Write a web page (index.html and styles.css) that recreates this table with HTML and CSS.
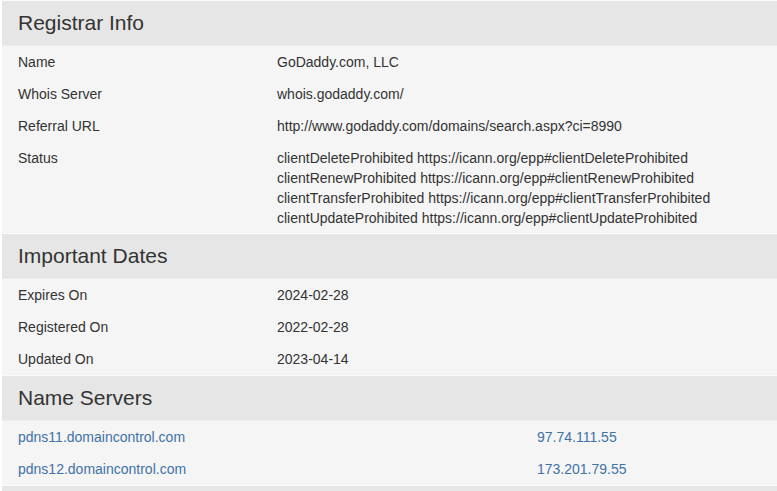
FILE: index.html
```html
<!DOCTYPE html>
<html>
<head>
<meta charset="utf-8">
<link rel="stylesheet" href="styles.css">
</head>
<body>
<div class="panel">
  <section class="sec">
    <h3 class="head">Registrar Info</h3>
    <div class="row"><div>Name</div><div>GoDaddy.com, LLC</div></div>
    <div class="row"><div>Whois Server</div><div>whois.godaddy.com/</div></div>
    <div class="row"><div>Referral URL</div><div>http://www.godaddy.com/domains/search.aspx?ci=8990</div></div>
    <div class="row last"><div>Status</div><div>clientDeleteProhibited https://icann.org/epp#clientDeleteProhibited<br>clientRenewProhibited https://icann.org/epp#clientRenewProhibited<br>clientTransferProhibited https://icann.org/epp#clientTransferProhibited<br>clientUpdateProhibited https://icann.org/epp#clientUpdateProhibited</div></div>
  </section>
  <section class="sec">
    <h3 class="head">Important Dates</h3>
    <div class="row"><div>Expires On</div><div>2024-02-28</div></div>
    <div class="row"><div>Registered On</div><div>2022-02-28</div></div>
    <div class="row"><div>Updated On</div><div>2023-04-14</div></div>
  </section>
  <section class="sec">
    <h3 class="head">Name Servers</h3>
    <div class="row ns"><a href="#">pdns11.domaincontrol.com</a><a href="#">97.74.111.55</a></div>
    <div class="row ns"><a href="#">pdns12.domaincontrol.com</a><a href="#">173.201.79.55</a></div>
  </section>
  <section class="sec">
    <div class="head"></div>
  </section>
</div>
</body>
</html>
```
FILE: styles.css
```css
html, body {
  margin: 0;
  padding: 0;
  background: #ffffff;
}
body {
  font-family: "Liberation Sans", Arial, sans-serif;
  font-size: 14px;
  color: #333333;
  overflow: hidden;
}
.panel {
  margin: 0 0 0 2px;
}
.sec {
  border-top: 1px solid #fbfbfb;
  background: #f5f5f5;
}
.head {
  margin: 0;
  height: 44px;
  line-height: 44px;
  padding: 0 16px;
  font-size: 21px;
  font-weight: normal;
  background: #e6e6e6;
  color: #333333;
  border-bottom: 1px solid #ececec;
}
.row {
  display: grid;
  grid-template-columns: 259px 1fr;
  padding: 6px 16px;
  line-height: 20px;
  background: #f5f5f5;
}
.row.last {
  padding-bottom: 5px;
}
.row.ns {
  grid-template-columns: 519px 1fr;
}
.row a {
  color: #3f72a6;
  text-decoration: none;
}
```
